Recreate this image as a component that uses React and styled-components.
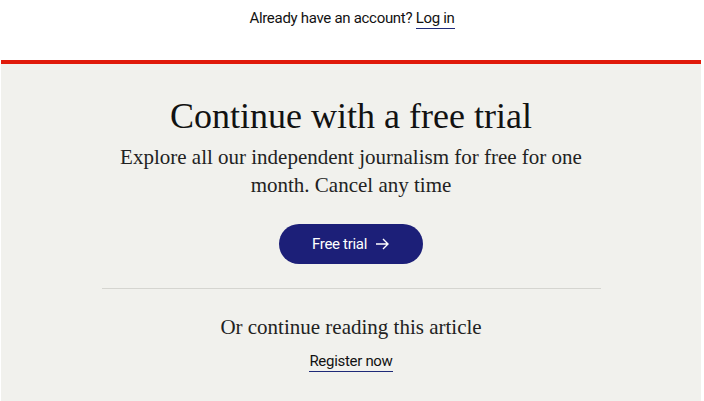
import React from 'react';
import styled, { createGlobalStyle } from 'styled-components';

const GlobalStyle = createGlobalStyle`
    html, body {
        margin: 0;
        padding: 0;
        background: #ffffff;
    }
    body {
        font-family: "Liberation Serif", serif;
        -webkit-font-smoothing: antialiased;
    }
`

function App() {
    return (
        <Page>
            <GlobalStyle />
            <TopBar>
                Already have an account? <TextLink href="#">Log in</TextLink>
            </TopBar>
            <Panel>
                <Title>Continue with a free trial</Title>
                <Lead>
                    Explore all our independent journalism for free for one month. Cancel any time
                </Lead>
                <TrialButton type="button">
                    Free trial
                    <svg width="15" height="12" viewBox="0 0 15 12" fill="none">
                        <path d="M1 6h12M8 1l5 5-5 5" stroke="#fff" strokeWidth="1.4" />
                    </svg>
                </TrialButton>
                <Divider />
                <Subtitle>Or continue reading this article</Subtitle>
                <TextLink href="#">Register now</TextLink>
            </Panel>
        </Page>
    )
}

export default App;


// styled component
const Page = styled.div`
    width: 704px;
    height: 401px;
    overflow: hidden;
    background: #fff;
`

const TopBar = styled.div`
    height: 60px;
    box-sizing: border-box;
    padding-top: 9px;
    text-align: center;
    font-family: "Roboto", sans-serif;
    font-size: 15px;
    letter-spacing: -0.3px;
    color: #121212;
`

const TextLink = styled.a`
    font-family: "Roboto", sans-serif;
    font-size: 15px;
    letter-spacing: -0.3px;
    color: #121212;
    text-decoration: none;
    border-bottom: 1px solid #1e2a78;
    padding-bottom: 1px;
`

const Panel = styled.div`
    margin: 0 3px 0 1px;
    height: 341px;
    box-sizing: border-box;
    border-top: 4px solid #e01a0a;
    background: #f1f1ed;
    display: flex;
    flex-direction: column;
    align-items: center;
    padding-top: 30px;
`

const Title = styled.h1`
    margin: 0;
    font-weight: 400;
    font-size: 36px;
    line-height: 44px;
    color: #121212;
`

const Lead = styled.p`
    margin: 5px 0 0;
    width: 470px;
    text-align: center;
    font-size: 21px;
    line-height: 28px;
    color: #222;
`

const TrialButton = styled.button`
    margin-top: 25px;
    width: 144px;
    height: 40px;
    border: none;
    border-radius: 20px;
    background: #1c1f78;
    color: #fff;
    font-family: "Roboto", sans-serif;
    font-size: 15px;
    letter-spacing: -0.3px;
    display: flex;
    align-items: center;
    justify-content: center;
    gap: 8px;
    cursor: pointer;
`

const Divider = styled.div`
    margin-top: 24px;
    width: 499px;
    height: 1px;
    background: #d5d5d0;
`

const Subtitle = styled.h2`
    margin: 24px 0 11px;
    font-weight: 400;
    font-size: 21px;
    line-height: 28px;
    color: #222;
`
